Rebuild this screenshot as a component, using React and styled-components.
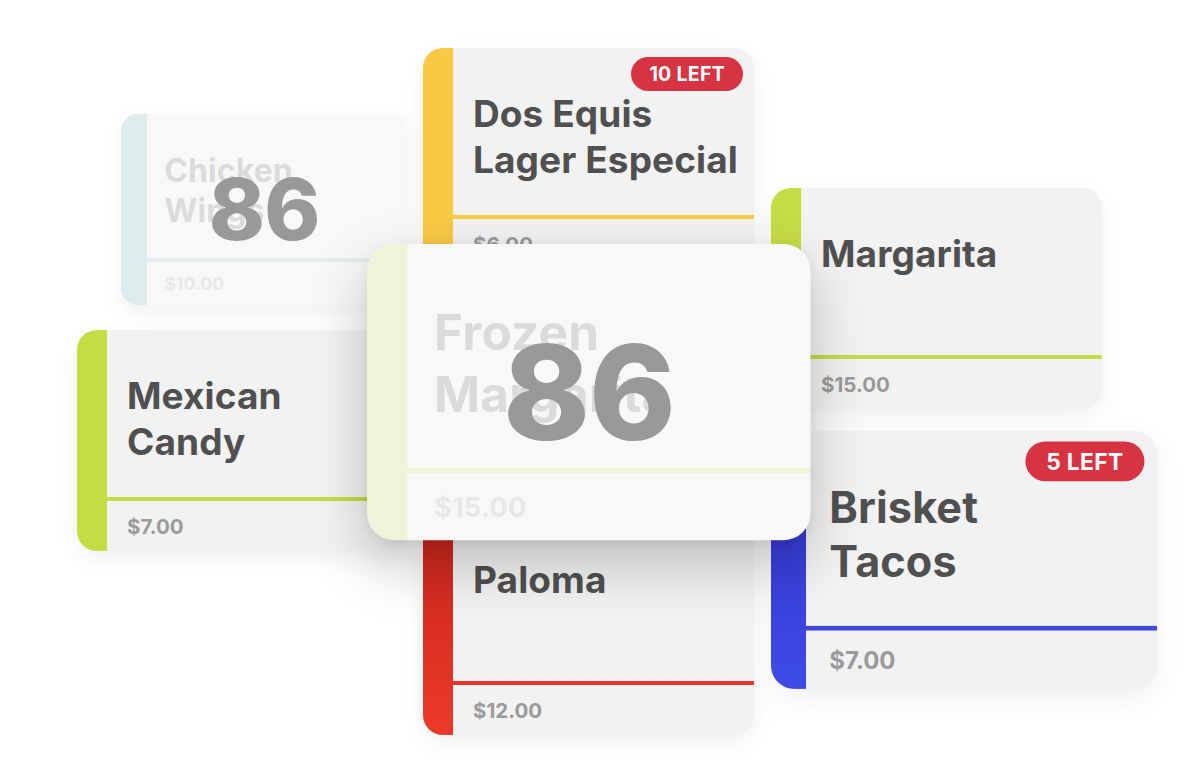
import React from "react";
import styled, { createGlobalStyle, css } from "styled-components";

const GlobalStyle = createGlobalStyle`
  html, body {
    margin: 0;
    padding: 0;
    background: #ffffff;
  }
  body {
    font-family: Inter, "Noto Sans", "Liberation Sans", sans-serif;
  }
`;

const items = [
  {
    id: "wings",
    title: ["Chicken", "Wings"],
    price: "$10.00",
    accent: "#62bcb6",
    left: 121,
    top: 114,
    scale: 0.865,
    eightySixed: true,
    z: 1,
  },
  {
    id: "dosequis",
    title: ["Dos Equis", "Lager Especial"],
    price: "$6.00",
    accent: "#f8c944",
    badge: "10 LEFT",
    left: 423,
    top: 48,
    scale: 1,
    z: 2,
  },
  {
    id: "margarita",
    title: ["Margarita"],
    price: "$15.00",
    accent: "#c6dc45",
    left: 771,
    top: 188,
    scale: 1,
    z: 2,
  },
  {
    id: "candy",
    title: ["Mexican", "Candy"],
    price: "$7.00",
    accent: "#c6dc45",
    left: 77,
    top: 330,
    scale: 1,
    z: 2,
  },
  {
    id: "paloma",
    title: ["Paloma"],
    price: "$12.00",
    accent: "#ea3629",
    stripe: "linear-gradient(180deg, #c8241b 0%, #ec3a29 100%)",
    left: 423,
    top: 514,
    scale: 1,
    z: 2,
  },
  {
    id: "brisket",
    title: ["Brisket", "Tacos"],
    price: "$7.00",
    accent: "#3d47e2",
    stripe: "linear-gradient(180deg, #3232cc 0%, #3e4be6 100%)",
    badge: "5 LEFT",
    left: 771,
    top: 431,
    scale: 1.167,
    z: 2,
  },
  {
    id: "frozen",
    title: ["Frozen", "Margarita"],
    price: "$15.00",
    accent: "#c6dc45",
    left: 367,
    top: 244,
    scale: 1.34,
    eightySixed: true,
    front: true,
    z: 5,
  },
];

export default function App() {
  return (
    <>
      <GlobalStyle />
      <Canvas>
        {items.map((item) => (
          <MenuCard
            key={item.id}
            $front={item.front}
            $faded={item.eightySixed}
            style={{
              left: item.left,
              top: item.top,
              zIndex: item.z,
              transform: `scale(${item.scale})`,
            }}
          >
            <Stripe $bg={item.stripe || item.accent} $faded={item.eightySixed} />
            <Body $faded={item.eightySixed}>
              <TitleArea>
                <Title>
                  {item.title.map((line) => (
                    <span key={line}>{line}</span>
                  ))}
                </Title>
              </TitleArea>
              <Divider $color={item.accent} />
              <PriceArea>
                <Price>{item.price}</Price>
              </PriceArea>
            </Body>
            {item.badge && <Badge>{item.badge}</Badge>}
            {item.eightySixed && <EightySix>86</EightySix>}
          </MenuCard>
        ))}
      </Canvas>
    </>
  );
}

const Canvas = styled.div`
  position: relative;
  width: 1198px;
  height: 782px;
  overflow: hidden;
  background: #ffffff;
`;

const MenuCard = styled.div`
  position: absolute;
  width: 331px;
  height: 221px;
  transform-origin: top left;
  display: grid;
  grid-template-columns: 30px 1fr;
  border-radius: 20px;
  overflow: hidden;
  background: ${(p) => (p.$faded ? "#f8f8f8" : "#f2f2f2")};
  box-shadow: 0 8px 24px rgba(0, 0, 0, 0.06);

  ${(p) =>
    p.$front &&
    css`
      box-shadow: 0 18px 44px rgba(0, 0, 0, 0.22), 0 2px 8px rgba(0, 0, 0, 0.06);
    `}
`;

const Stripe = styled.div`
  background: ${(p) => p.$bg};
  opacity: ${(p) => (p.$faded ? 0.18 : 1)};
`;

const Body = styled.div`
  display: flex;
  flex-direction: column;
  min-width: 0;
  opacity: ${(p) => (p.$faded ? 0.17 : 1)};
`;

const TitleArea = styled.div`
  flex: 1;
  padding: 43px 10px 0 20px;
`;

const Title = styled.h2`
  margin: 0;
  font-size: 37px;
  line-height: 46px;
  font-weight: 700;
  color: #505050;
  letter-spacing: 0.1px;

  span {
    display: block;
    white-space: nowrap;
  }
`;

const Divider = styled.div`
  height: 4px;
  background: ${(p) => p.$color};
`;

const PriceArea = styled.div`
  height: 50px;
  display: flex;
  align-items: center;
  padding-left: 20px;
`;

const Price = styled.span`
  font-size: 20.5px;
  font-weight: 700;
  color: #9a9a9a;
`;

const Badge = styled.div`
  position: absolute;
  top: 9px;
  right: 11px;
  height: 34px;
  padding: 0 18px;
  border-radius: 17px;
  background: #d73343;
  color: #ffffff;
  font-size: 19.5px;
  font-weight: 700;
  display: flex;
  align-items: center;
  letter-spacing: 0.3px;
`;

const EightySix = styled.div`
  position: absolute;
  inset: 0;
  display: flex;
  align-items: center;
  justify-content: center;
  font-size: 98px;
  font-weight: 800;
  color: #999999;
  letter-spacing: -1px;
  pointer-events: none;
`;
